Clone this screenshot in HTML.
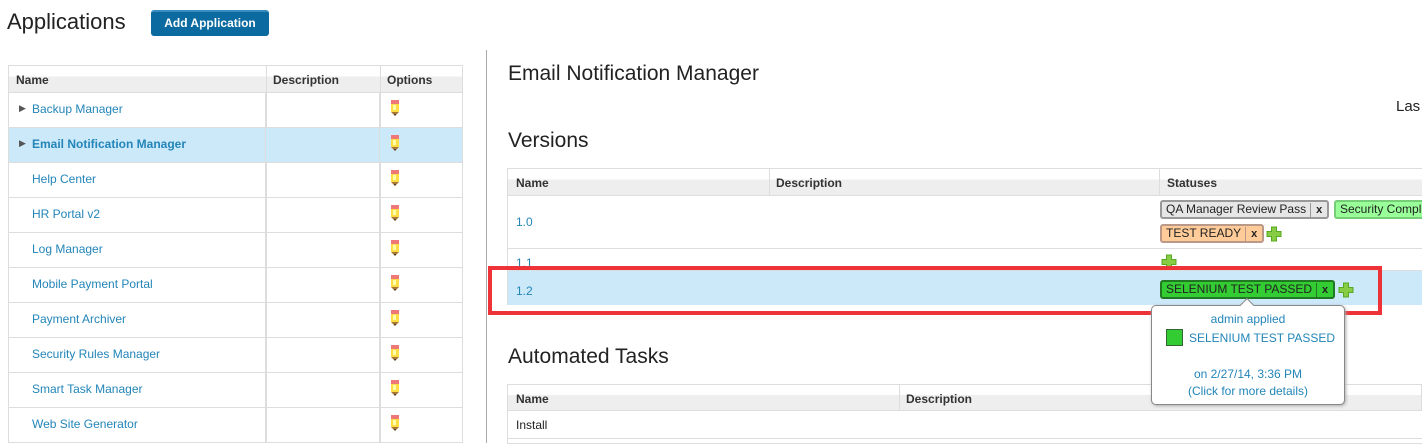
<!DOCTYPE html>
<html><head><style>
*{margin:0;padding:0;box-sizing:border-box}
body{width:1422px;height:443px;overflow:hidden;background:#fff;font-family:"Liberation Sans",Arial,sans-serif;position:relative;font-size:12px;color:#222}
.a{position:absolute}
a{color:#2385b8;text-decoration:none}
.tbl{position:absolute;border:1px solid #ddd;background:#fff}
.hdr{position:absolute;left:0;right:0;background:linear-gradient(#fff 0,#fff 40%,#eee 40%,#eee 100%);border-bottom:1px solid #ddd;font-weight:bold;color:#333}
.row{position:absolute;left:0;right:0;border-bottom:1px solid #ddd}
.vl{position:absolute;top:0;bottom:0;width:1px;background:#ddd}
.pen{position:absolute;width:8px;height:16px}
.tag{position:absolute;height:19px;border:2px solid;border-radius:3px;font-size:12px;line-height:15px;padding-left:4px;white-space:nowrap}
.tag b{display:inline-block;border-left:1px solid;padding:0 5px;margin-left:4px;font-size:11px}
.plus{position:absolute;width:16px;height:16px}
</style></head><body>
<div class="a" style="left:7px;top:9px;font-size:22px;color:#222">Applications</div>
<div class="a" style="left:151px;top:10px;width:118px;height:26px;background:#0b6aa0;border-radius:3px;border-top:2px solid #3a8cc0;color:#fff;font-weight:bold;font-size:12px;text-align:center;line-height:23px">Add Application</div>

<div class="tbl" style="left:8px;top:65px;width:455px;height:378px">
<div class="hdr" style="top:0;height:27px"><span class="a" style="left:7px;top:7px">Name</span><span class="a" style="left:264px;top:7px">Description</span><span class="a" style="left:378px;top:7px">Options</span></div>
<div class="vl" style="left:257px"></div><div class="vl" style="left:371px"></div>
</div>
<div class="a" style="left:486px;top:50px;width:1px;height:393px;background:#aaa"></div>

<div id="rows"></div>

<div class="a" style="left:508px;top:62px;font-size:21px;color:#222">Email Notification Manager</div>
<div class="a" style="left:1396px;top:98px;font-size:15px">Las</div>
<div class="a" style="left:508px;top:129px;font-size:21px;color:#222">Versions</div>

<div class="tbl" style="left:507px;top:168px;width:920px;height:137px">
<div class="hdr" style="top:0;height:27px"><span class="a" style="left:8px;top:7px">Name</span><span class="a" style="left:268px;top:7px">Description</span><span class="a" style="left:659px;top:7px">Statuses</span></div>
<div class="row" style="top:27px;height:53px"><a class="a" style="left:8px;top:19px">1.0</a></div>
<div class="row" style="top:80px;height:22px"><a class="a" style="left:8px;top:7px">1.1</a></div>
<div class="row" style="top:102px;height:34px;background:#cce9fa;border:none"><a class="a" style="left:8px;top:13px">1.2</a></div>
<div class="vl" style="left:261px;height:27px"></div><div class="vl" style="left:651px;height:27px"></div>
</div>

<div class="tag" style="left:1160px;top:200px;border-color:#999;background:#e6e6e6">QA Manager Review Pass<b style="border-color:#999">x</b></div>
<div class="tag" style="left:1334px;top:200px;border-color:#7c7;background:#9f9;border-right:none;width:100px">Security Compl</div>
<div class="tag" style="left:1160px;top:224px;border-color:#b98;background:#fc9">TEST READY<b style="border-color:#b98">x</b></div>
<div class="tag" style="left:1160px;top:280px;border-color:#272;background:#3c3">SELENIUM TEST PASSED<b style="border-color:#272">x</b></div>

<div id="plus"></div>

<div class="a" style="left:488px;top:266px;width:894px;height:49px;border:4px solid #ee3338"></div>

<div class="a" style="left:508px;top:345px;font-size:21px;color:#222">Automated Tasks</div>
<div class="tbl" style="left:507px;top:384px;width:920px;height:60px">
<div class="hdr" style="top:0;height:26px"><span class="a" style="left:8px;top:7px">Name</span><span class="a" style="left:398px;top:7px">Description</span></div>
<div class="row" style="top:26px;height:28px"><span class="a" style="left:8px;top:7px">Install</span></div>
<div class="vl" style="left:391px;height:26px"></div><div class="vl" style="left:913px;height:26px"></div>
</div>

<div class="a" style="left:1151px;top:305px;width:194px;height:100px;background:#fff;border:1px solid #888;border-radius:5px;box-shadow:1px 1px 3px #aaa;color:#2385b8;font-size:12px;text-align:center">
<div class="a" style="left:90px;top:-6px;width:10px;height:10px;background:#fff;border-left:1px solid #888;border-top:1px solid #888;transform:rotate(45deg)"></div>
<div class="a" style="left:0;right:0;top:6px">admin applied</div>
<div class="a" style="left:14px;top:23px;width:17px;height:17px;background:#3c3;border:1px solid #363"></div>
<div class="a" style="left:37px;top:25px">SELENIUM TEST PASSED</div>
<div class="a" style="left:0;right:0;top:61px">on 2/27/14, 3:36 PM</div>
<div class="a" style="left:0;right:0;top:78px">(Click for more details)</div>
</div>

<script>
var names=["Backup Manager","Email Notification Manager","Help Center","HR Portal v2","Log Manager","Mobile Payment Portal","Payment Archiver","Security Rules Manager","Smart Task Manager","Web Site Generator"];
var h="";
names.forEach(function(n,i){var y=93+i*35;
h+='<div class="a" style="left:9px;top:'+y+'px;width:453px;height:35px;border-bottom:1px solid #ddd;'+(i==1?'background:#cce9fa;':'')+'"></div>';
if(i<2)h+='<div class="a" style="left:19px;top:'+(y+10)+'px;font-size:9px;color:#555">&#9654;</div>';
h+='<a class="a" style="left:32px;top:'+(y+9)+'px;font-size:12px;'+(i==1?'font-weight:bold;':'')+'">'+n+'</a>';
h+='<svg class="pen" style="left:391px;top:'+(y+7)+'px" viewBox="0 0 8 16"><rect x="0" y="0" width="8" height="4" fill="#e77"/><rect x="0" y="4" width="8" height="8" fill="#fd4"/><rect x="2" y="5" width="3" height="5" fill="#ffa"/><path d="M0 12 L8 12 L4 16Z" fill="#a73"/><path d="M3 14L5 14L4 16Z" fill="#333"/></svg>';
h+='<div class="a" style="left:265px;top:'+y+'px;width:1px;height:35px;background:#ddd"></div><div class="a" style="left:379px;top:'+y+'px;width:1px;height:35px;background:#ddd"></div>';
});
document.getElementById("rows").innerHTML=h;
var plus=function(x,y){return '<svg class="plus" style="left:'+x+'px;top:'+y+'px" viewBox="0 0 16 16"><path d="M5.5 1h5v4.5h4.5v5h-4.5v4.5h-5v-4.5h-4.5v-5h4.5z" fill="#8c4" stroke="#5a2" stroke-width="1"/></svg>';};
document.getElementById("plus").innerHTML=plus(1266,226)+plus(1161,254)+plus(1338,282);
</script>
</body></html>
